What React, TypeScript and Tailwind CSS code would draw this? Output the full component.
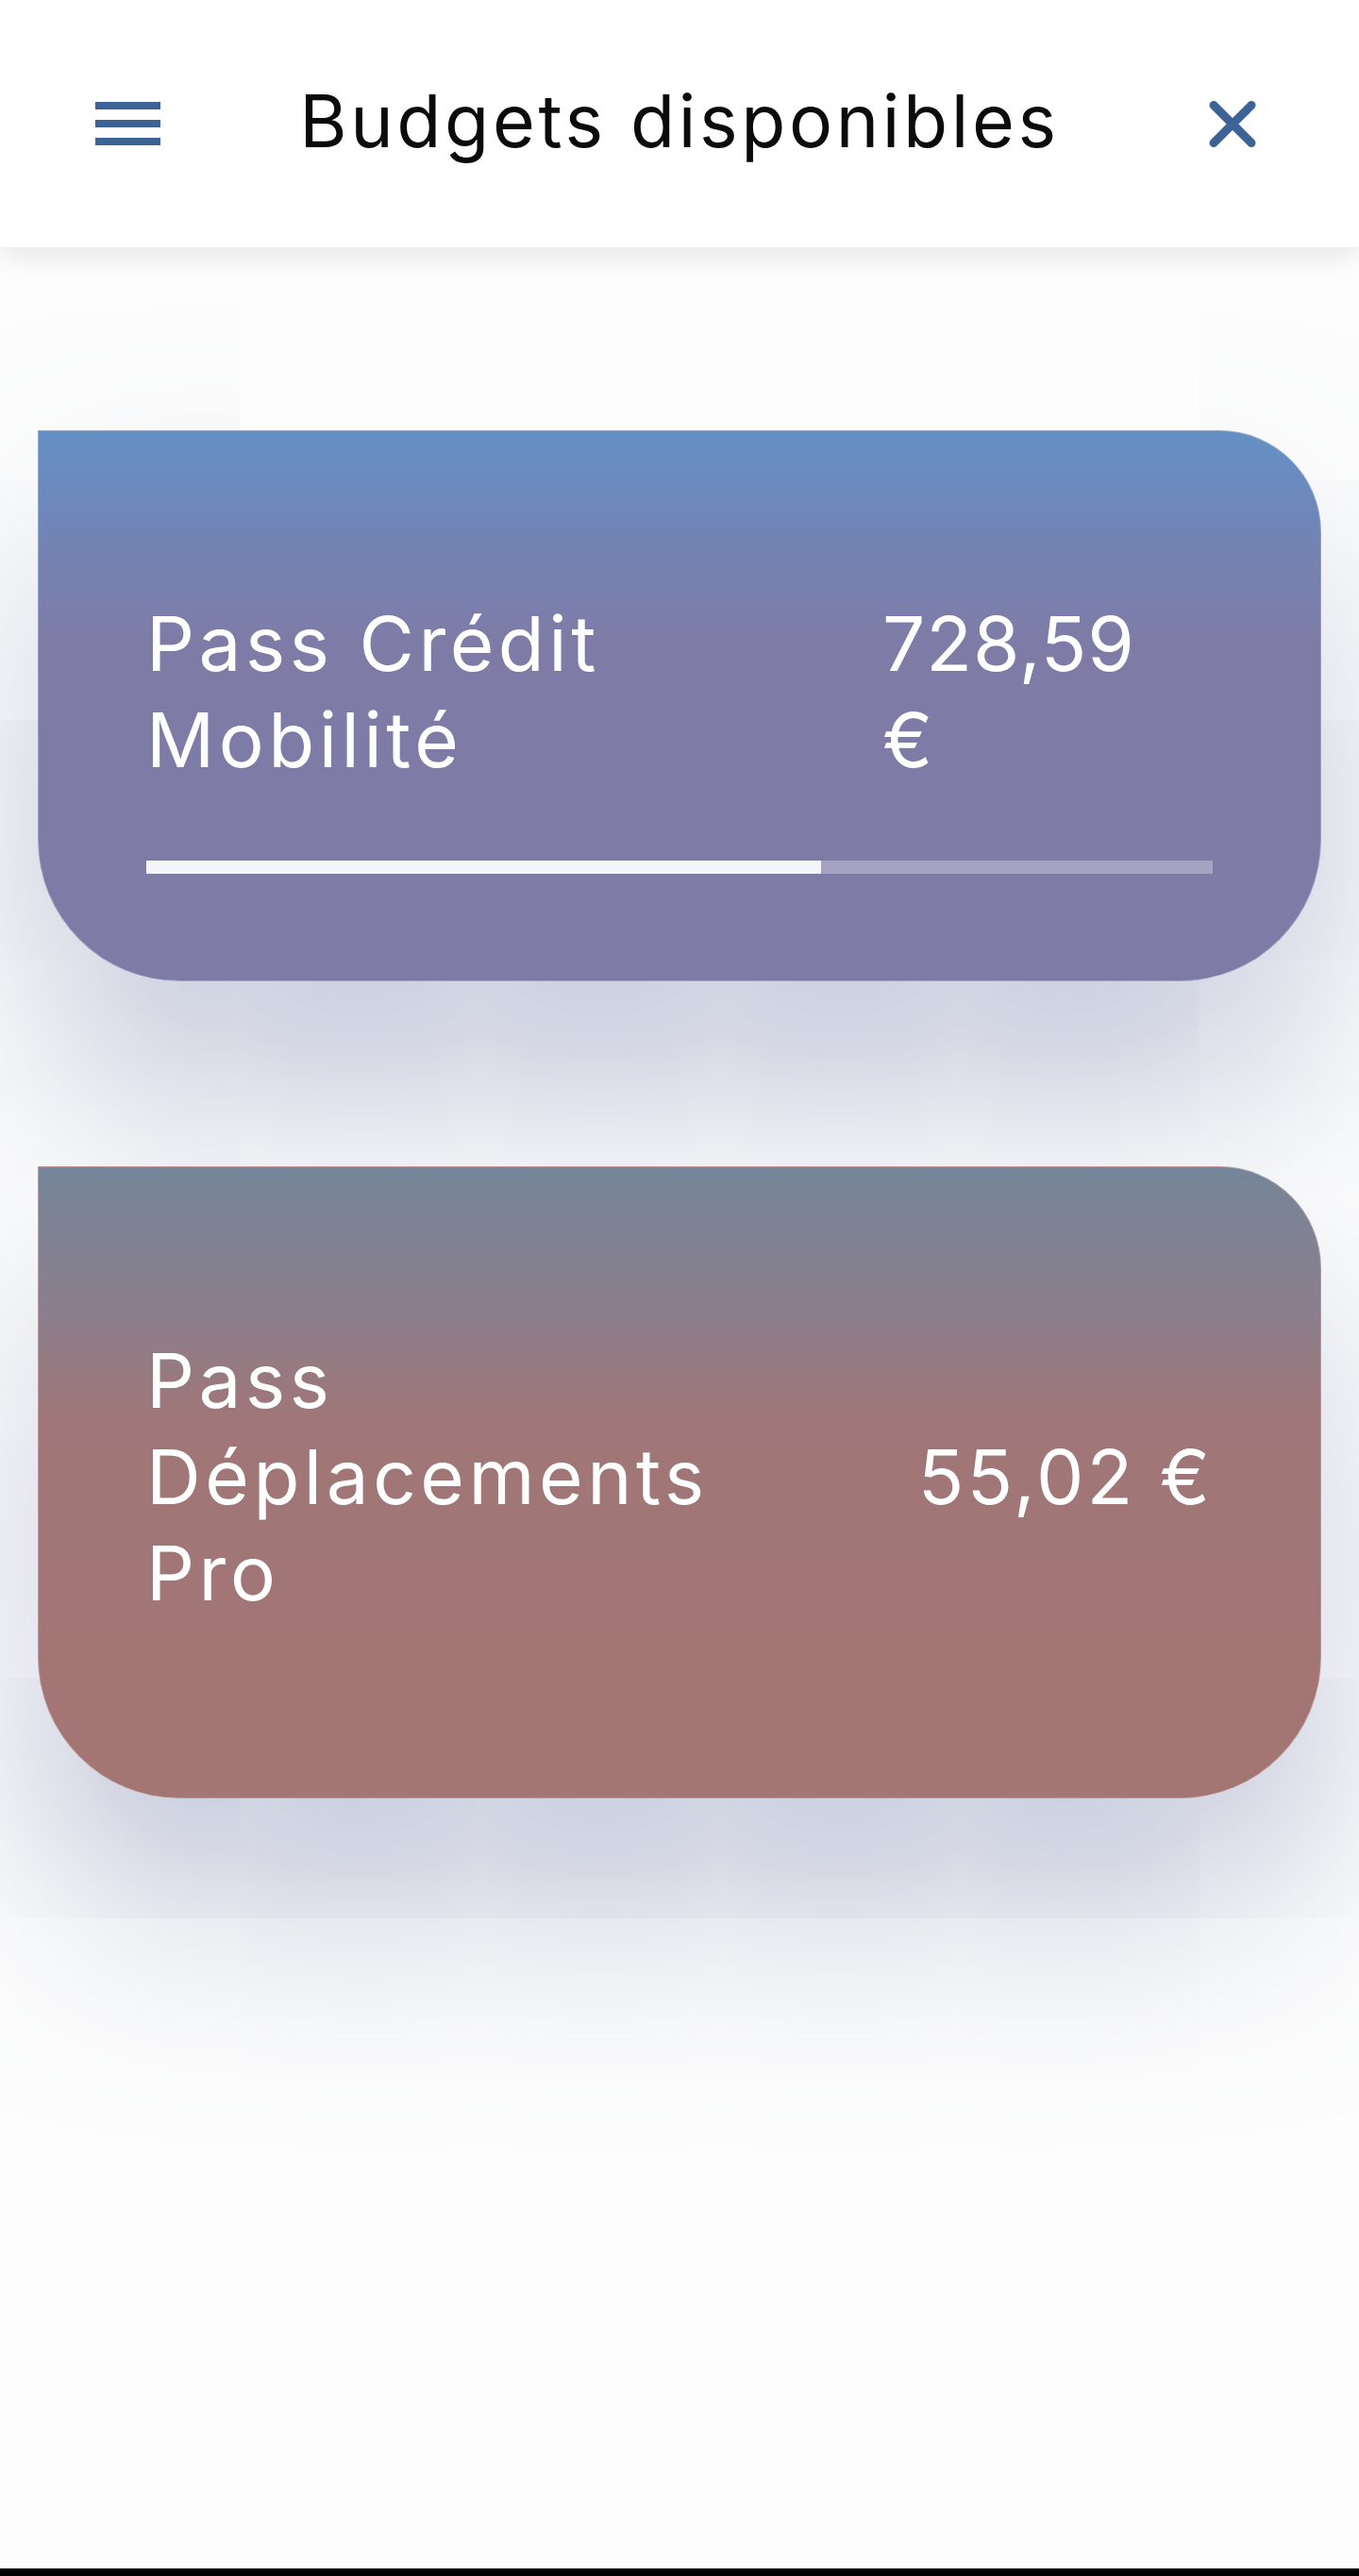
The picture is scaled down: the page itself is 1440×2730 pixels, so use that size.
import React from "react";

const font = { fontFamily: "Inter, 'Open Sans', 'Liberation Sans', sans-serif" };

function Hamburger() {
  return (
    <div className="flex w-[69px] flex-col gap-[11px]">
      <div className="h-[8px] w-full bg-[#3c6296]" />
      <div className="h-[8px] w-full bg-[#3c6296]" />
      <div className="h-[8px] w-full bg-[#3c6296]" />
    </div>
  );
}

function CloseIcon() {
  return (
    <svg width="50" height="51" viewBox="0 0 50 51" fill="none">
      <path d="M5 5.5 L45 45.5 M45 5.5 L5 45.5" stroke="#3c6296" strokeWidth="9" strokeLinecap="round" />
    </svg>
  );
}

export default function App() {
  return (
    <div
      className="relative flex h-[2730px] w-[1440px] flex-col overflow-hidden bg-[#fdfdfd] text-white"
      style={font}
    >
      <header className="relative z-10 grid h-[262px] shrink-0 grid-cols-[1fr_auto_1fr] items-center bg-white shadow-[0_8px_30px_rgba(0,0,0,0.1)]">
        <div className="justify-self-start pl-[101px]">
          <Hamburger />
        </div>
        <h1 className="pb-[6px] text-[77px] font-normal leading-none tracking-[3.6px] text-[#0b0b0b]">
          Budgets disponibles
        </h1>
        <div className="justify-self-end pr-[109px]">
          <CloseIcon />
        </div>
      </header>

      <main className="flex flex-1 flex-col gap-[196px] px-[40px] pt-[194px]">
        <section className="h-[584px] rounded-tr-[108px] rounded-br-[150px] rounded-bl-[150px] border border-[#a9bcd8]/60 bg-[linear-gradient(180deg,#6590c5_0%,#7284b5_18%,#7e7ca7_38%,#7e7ca6_100%)] px-[114px] pt-[174px] shadow-[0_120px_220px_-10px_rgba(125,135,175,0.5)]">
          <div className="flex items-start justify-between text-[80px] leading-[102px]">
            <div className="tracking-[4.5px]">
              Pass Crédit
              <br />
              Mobilité
            </div>
            <div className="w-[350px] text-left tracking-[1px]">
              728,59
              <br />€
            </div>
          </div>
          <div className="mt-[77px] flex h-[14px] w-full bg-white/30">
            <div className="h-full w-[63.3%] bg-[#f3f5fb]" />
          </div>
        </section>

        <section className="h-[670px] rounded-tr-[108px] rounded-br-[150px] rounded-bl-[150px] border border-[#c9b3b5]/60 bg-[linear-gradient(180deg,#768599_0%,#8a7f8d_22%,#a07678_40%,#a37573_100%)] px-[114px] pt-[175px] shadow-[0_120px_220px_-10px_rgba(125,135,175,0.5)]">
          <div className="flex items-center justify-between text-[80px] leading-[102px]">
            <div className="tracking-[4.5px]">
              Pass
              <br />
              Déplacements
              <br />
              Pro
            </div>
            <div className="whitespace-nowrap tracking-[3px]">55,02 €</div>
          </div>
        </section>
      </main>

      <div className="h-[8px] shrink-0 bg-black" />
    </div>
  );
}
